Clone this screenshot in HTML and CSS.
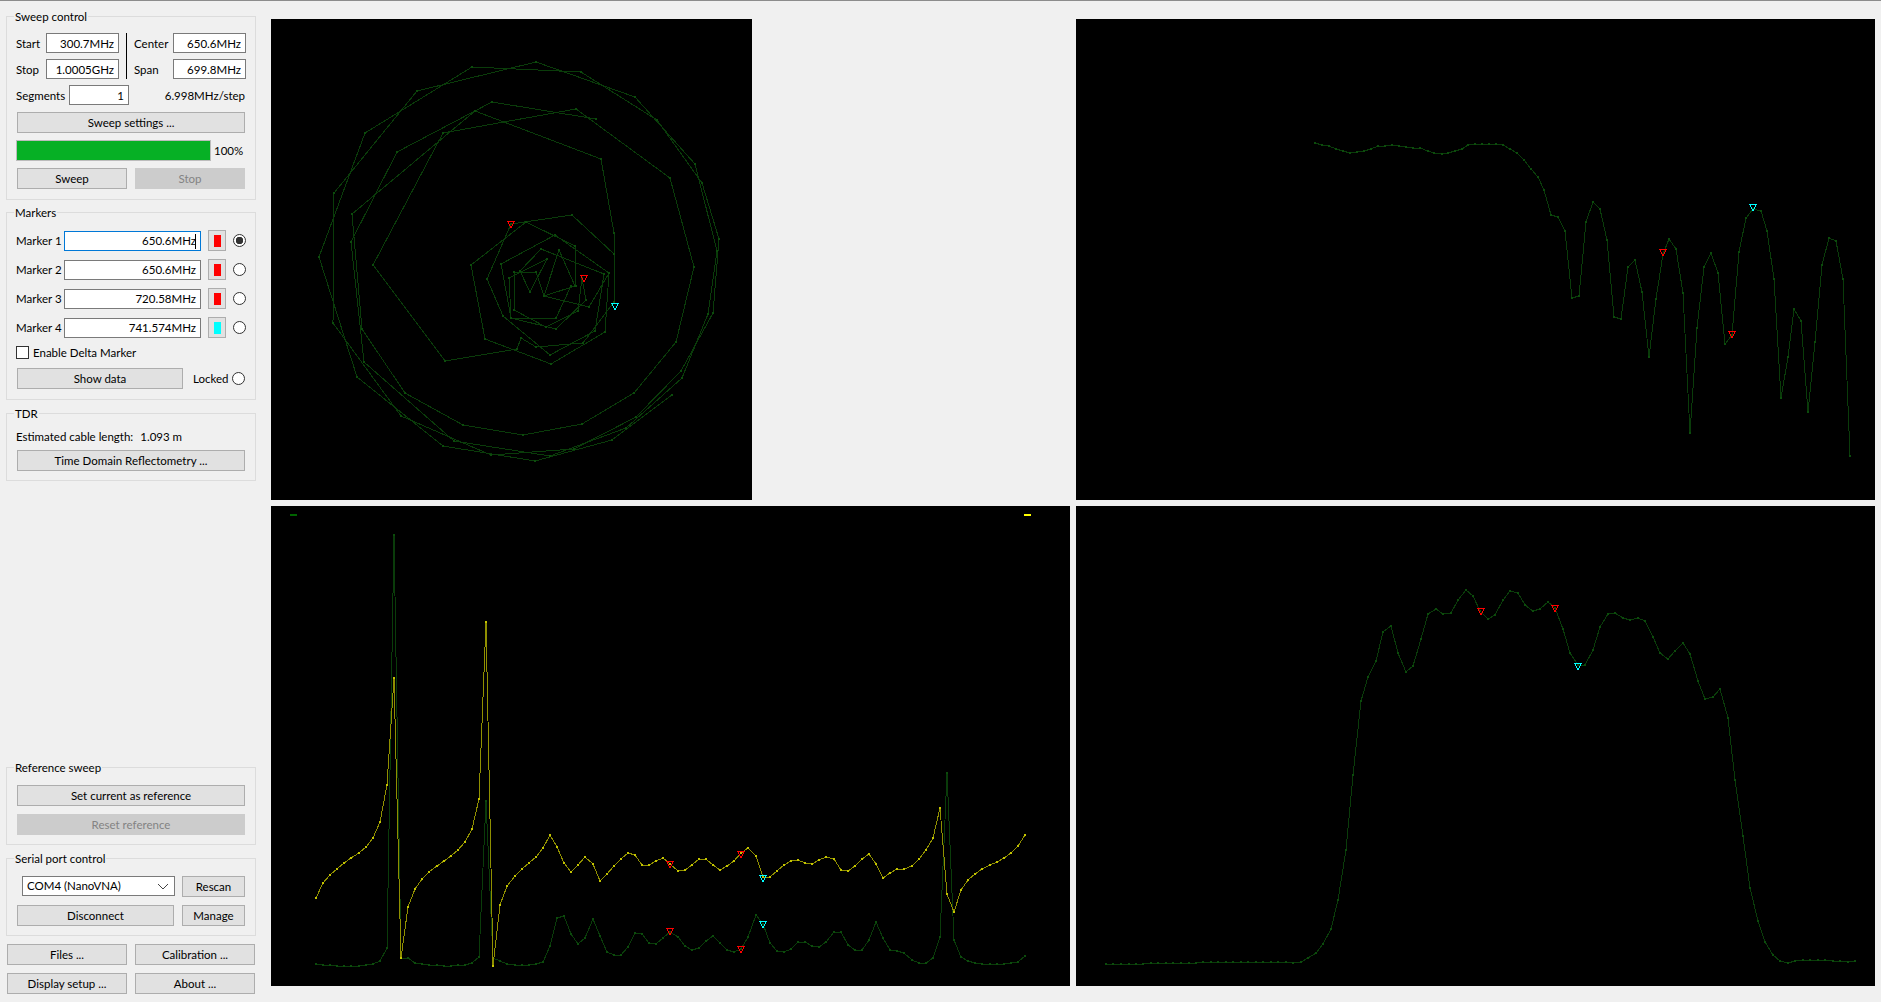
FILE: index.html
```html
<!DOCTYPE html>
<html lang="en">
<head>
  <meta charset="UTF-8" />
  <title>NanoVNA Saver</title>
  <link rel="stylesheet" href="styles.css">
</head>
<body>
  <aside id="controls">
    <section class="group sweep-group">
      <h2>Sweep control</h2>
      <div class="freq-grid">
        <div class="freq-col">
          <label class="row"><span class="lbl-start">Start</span><input class="field" value="300.7MHz"></label>
          <label class="row"><span class="lbl-start">Stop</span><input class="field" value="1.0005GHz"></label>
        </div>
        <div class="divider"></div>
        <div class="freq-col">
          <label class="row"><span class="lbl-center">Center</span><input class="field" value="650.6MHz"></label>
          <label class="row"><span class="lbl-center">Span</span><input class="field" value="699.8MHz"></label>
        </div>
      </div>
      <div class="row seg-row">
        <span class="lbl-seg">Segments</span>
        <input class="field seg-field" value="1">
        <span class="step">6.998MHz/step</span>
      </div>
      <button class="btn wide settings-btn">Sweep settings ...</button>
      <div class="progress-row">
        <div class="progress"><div class="progress-fill"></div></div>
        <span>100%</span>
      </div>
      <div class="btn-pair">
        <button class="btn">Sweep</button>
        <button class="btn" disabled>Stop</button>
      </div>
    </section>

    <section class="group marker-group">
      <h2>Markers</h2>
      <div class="marker-row">
        <span class="lbl-marker">Marker 1</span>
        <div class="field marker-field focused">650.6MHz<span class="caret"></span></div>
        <div class="swatch-btn"><div class="swatch red"></div></div>
        <div class="radio on"></div>
      </div>
      <div class="marker-row">
        <span class="lbl-marker">Marker 2</span>
        <div class="field marker-field">650.6MHz</div>
        <div class="swatch-btn"><div class="swatch red"></div></div>
        <div class="radio"></div>
      </div>
      <div class="marker-row">
        <span class="lbl-marker">Marker 3</span>
        <div class="field marker-field">720.58MHz</div>
        <div class="swatch-btn"><div class="swatch red"></div></div>
        <div class="radio"></div>
      </div>
      <div class="marker-row">
        <span class="lbl-marker">Marker 4</span>
        <div class="field marker-field">741.574MHz</div>
        <div class="swatch-btn"><div class="swatch cyan"></div></div>
        <div class="radio"></div>
      </div>
      <div class="check-row"><div class="check"></div><span>Enable Delta Marker</span></div>
      <div class="data-row">
        <button class="btn data-btn">Show data</button>
        <span class="locked">Locked</span>
        <div class="radio"></div>
      </div>
    </section>

    <section class="group tdr-group">
      <h2>TDR</h2>
      <div class="cable"><span>Estimated cable length:</span><span>1.093 m</span></div>
      <button class="btn wide">Time Domain Reflectometry ...</button>
    </section>

    <div class="spacer"></div>

    <section class="group ref-group">
      <h2>Reference sweep</h2>
      <button class="btn wide">Set current as reference</button>
      <button class="btn wide" disabled>Reset reference</button>
    </section>

    <section class="group serial-group">
      <h2>Serial port control</h2>
      <div class="serial-row">
        <div class="combo">COM4 (NanoVNA)
          <svg class="chevron" width="12" height="7" viewBox="0 0 12 7"><path d="M1 1l5 5 5-5" fill="none" stroke="#444" stroke-width="1"/></svg>
        </div>
        <button class="btn side-btn">Rescan</button>
      </div>
      <div class="serial-row">
        <button class="btn disconnect-btn">Disconnect</button>
        <button class="btn side-btn">Manage</button>
      </div>
    </section>

    <div class="bottom-btns">
      <button class="btn">Files ...</button>
      <button class="btn">Calibration ...</button>
      <button class="btn">Display setup ...</button>
      <button class="btn">About ...</button>
    </div>
  </aside>

  <main id="charts">
    <div class="chart-cell"><svg id="smith" class="chart square" width="481" height="481"></svg></div>
    <div class="chart-cell"><svg id="gain" class="chart" width="799" height="481"></svg></div>
    <div class="chart-cell"><svg id="vswr" class="chart" width="799" height="480"></svg></div>
    <div class="chart-cell"><svg id="s21" class="chart" width="799" height="480"></svg></div>
  </main>

  <script src="charts.js"></script>
</body>
</html>
```
FILE: styles.css
```css
* {
  box-sizing: border-box;
}
html, body {
  height: 100%;
}
body {
  margin: 0;
  height: 1002px;
  overflow: hidden;
  display: flex;
  background: #f0f0f0;
  border-top: 1px solid #8c8c8c;
  font-family: "Lato", "Noto Sans", sans-serif;
  font-size: 11.5px;
  color: #000;
}
#controls {
  width: 271px;
  flex: none;
  display: flex;
  flex-direction: column;
  padding: 15px 0 8px 6px;
}
.spacer {
  flex: 1;
}
.group {
  position: relative;
  width: 250px;
  border: 1px solid #dcdcdc;
  padding: 0 9px 0 9px;
  margin-bottom: 13px;
}
.group h2 {
  position: absolute;
  top: -8px;
  left: 7px;
  margin: 0;
  padding: 0 1px;
  background: #f0f0f0;
  font-size: 11.5px;
  line-height: 15px;
  font-weight: normal;
}
.sweep-group {
  height: 184px;
  padding-top: 16px;
  margin-bottom: 12px;
}
.marker-group {
  height: 188px;
  padding-top: 17px;
}
.tdr-group {
  height: 68px;
  padding-top: 15px;
}
.ref-group {
  height: 78px;
  padding-top: 17px;
}
.serial-group {
  height: 78px;
  padding-top: 17px;
  margin-bottom: 8px;
}
.row {
  display: flex;
  align-items: center;
}
.freq-grid {
  display: flex;
  height: 46px;
}
.freq-col {
  display: flex;
  flex-direction: column;
  gap: 6px;
}
.divider {
  width: 1px;
  background: #000;
  margin: 0 7px;
}
.lbl-start {
  width: 30px;
}
.lbl-center {
  width: 39px;
}
.field {
  width: 73px;
  height: 20px;
  border: 1px solid #7a7a7a;
  background: #fff;
  font: inherit;
  color: #000;
  text-align: right;
  padding: 0 4px;
  outline: none;
}
.seg-row {
  margin-top: 6px;
  height: 20px;
}
.lbl-seg {
  width: 53px;
}
.seg-field {
  width: 60px;
}
.step {
  margin-left: auto;
  margin-right: 1px;
}
.btn {
  height: 21px;
  border: 1px solid #adadad;
  background: #e1e1e1;
  font: inherit;
  color: #000;
  padding: 0;
}
.btn[disabled] {
  background: #cccccc;
  border-color: #cccccc;
  color: #838383;
}
.wide {
  display: block;
  width: 228px;
  margin-left: 1px;
}
.settings-btn {
  margin-top: 7px;
}
.progress-row {
  display: flex;
  align-items: center;
  gap: 3px;
  margin-top: 7px;
  height: 21px;
}
.progress {
  width: 195px;
  height: 21px;
  border: 1px solid #bcbcbc;
  background: #e6e6e6;
}
.progress-fill {
  height: 100%;
  background: #06b025;
}
.btn-pair {
  display: flex;
  gap: 8px;
  margin: 7px 0 0 1px;
}
.btn-pair .btn {
  width: 110px;
}
.marker-row {
  display: flex;
  align-items: center;
  height: 21px;
  margin-bottom: 8px;
}
.lbl-marker {
  width: 48px;
}
.marker-field {
  width: 137px;
  height: 20px;
  line-height: 18px;
  position: relative;
}
.focused {
  border-color: #0078d7;
}
.caret {
  position: absolute;
  right: 4px;
  top: 2px;
  width: 1px;
  height: 15px;
  background: #000;
}
.swatch-btn {
  width: 18px;
  height: 21px;
  margin-left: 7px;
  background: #e1e1e1;
  border: 1px solid #adadad;
  display: flex;
  align-items: center;
  justify-content: center;
}
.swatch {
  width: 7px;
  height: 12px;
}
.red {
  background: #ff0000;
}
.cyan {
  background: #00ffff;
}
.radio {
  width: 13px;
  height: 13px;
  margin-left: 7px;
  border: 1px solid #333;
  border-radius: 50%;
  background: #fff;
  flex: none;
}
.radio.on {
  background: radial-gradient(circle, #333 0 3.5px, #fff 4px);
}
.check-row {
  display: flex;
  align-items: center;
  gap: 4px;
  height: 13px;
  margin-top: 1px;
}
.check {
  width: 13px;
  height: 13px;
  border: 1px solid #333;
  background: #fff;
}
.data-row {
  display: flex;
  align-items: center;
  margin: 9px 0 0 1px;
}
.data-btn {
  width: 166px;
}
.locked {
  margin-left: 10px;
}
.data-row .radio {
  margin-left: auto;
  margin-right: 1px;
}
.cable {
  display: flex;
  gap: 7px;
  height: 16px;
  line-height: 16px;
}
.tdr-group .btn {
  margin-top: 5px;
}
.ref-group .btn + .btn {
  margin-top: 8px;
}
.serial-row {
  display: flex;
  justify-content: space-between;
  margin: 0 0 8px 1px;
  width: 228px;
}
.combo {
  width: 153px;
  height: 20px;
  margin-left: 5px;
  border: 1px solid #7a7a7a;
  background: #fff;
  line-height: 18px;
  padding-left: 4px;
  position: relative;
}
.chevron {
  position: absolute;
  right: 5px;
  top: 6px;
}
.side-btn {
  width: 63px;
}
.disconnect-btn {
  width: 157px;
}
.bottom-btns {
  display: grid;
  grid-template-columns: 120px 120px;
  gap: 8px;
  margin-left: 1px;
}
#charts {
  display: grid;
  grid-template-columns: 799px 799px;
  grid-template-rows: 481px 480px;
  column-gap: 6px;
  row-gap: 6px;
  padding-top: 18px;
}
.chart-cell {
  display: flex;
}
.chart {
  display: block;
  background: #000;
}
```
FILE: charts.js
```js
// traces are stored in the units they were read off at (ox/oy origin, sx/sy units per px)
const GREEN = '#0a3c0a';
const GREEN_DOT = '#0c4c0c';
const YELLOW = '#8f8f00';
const YELLOW_DOT = '#c4c400';

const smithTraces = [
  [[1205,1140],[1026,1275],[796,1337],[519,1293],[261,1086],[148,725],[285,353],[605,156],[933,170],[1162,314],[1295,505],[1346,672],[1329,893],[1232,1068],[1098,1207],[912,1303],[663,1319],[393,1202],[189,924],[192,533],[441,228],[797,141],[1095,245],[1275,447],[1342,708],[1315,896],[1237,1088],[1068,1240],[840,1322],[552,1277],[281,1042],[243,680],[380,410],[666,261],[978,312]],
  [[919,281],[1200,488],[1272,756],[1218,982],[1092,1133],[936,1228],[760,1260],[578,1230],[404,1134],[275,943],[247,597],[615,287],[994,432],[1033,655],[1033,860],[940,985],[798,995],[753,968],[741,1002],[525,1038],[309,750],[519,355],[919,281]],
  [[1033,860],[1033,717],[907,600],[723,628],[651,791],[700,902],[840,1020],[975,947],[1002,776],[813,702],[750,768],[781,830],[832,732],[716,790],[724,908],[858,942],[948,855],[935,790],[924,887],[828,935],[733,885],[733,770],[797,770],[822,843],[868,705],[915,812],[822,843],[958,876],[1018,774],[855,660],[693,746],[723,908],[858,910],[903,812]],
  [[1018,774],[1005,951],[844,1047],[645,971],[604,750],[768,621],[915,692],[918,812]]
];

const gainTrace = [[65,68],[84,74],[103,77],[121,86],[140,92],[159,98],[178,96],[196,92],[215,86],[234,79],[252,77],[271,75],[290,78],[308,81],[327,84],[346,85],[365,92],[383,100],[402,103],[420,100],[438,94],[455,86],[473,76],[491,73],[510,71],[528,71],[546,71],[565,76],[584,86],[602,98],[620,119],[640,146],[658,171],[674,209],[692,285],[710,292],[730,332],[748,535],[767,528],[785,305],[803,247],[822,266],[841,360],[860,592],[878,597],[896,441],[915,419],[934,517],[952,712],[971,537],[990,403],[1006,356],[1024,386],[1043,519],[1062,940],[1080,625],[1098,440],[1117,399],[1136,459],[1154,672],[1173,645],[1191,396],[1210,293],[1229,268],[1248,272],[1266,333],[1285,478],[1303,835],[1322,710],[1337,566],[1356,603],[1375,877],[1393,665],[1412,436],[1430,355],[1449,362],[1468,476],[1485,1008]];

const vswrYellow = [[138,1178],[159,1134],[180,1110],[201,1092],[222,1074],[243,1059],[267,1044],[288,1025],[309,998],[330,951],[351,840],[372,518],[393,1358],[414,1205],[435,1152],[456,1122],[477,1101],[501,1083],[522,1068],[543,1052],[564,1034],[585,1010],[606,971],[627,881],[648,352],[669,1383],[690,1199],[711,1142],[735,1113],[756,1092],[777,1074],[798,1055],[819,1028],[840,989],[861,1025],[882,1073],[903,1101],[924,1079],[945,1055],[968,1076],[990,1128],[1011,1106],[1032,1083],[1053,1062],[1074,1043],[1095,1049],[1116,1080],[1137,1080],[1158,1068],[1179,1058],[1200,1076],[1224,1097],[1245,1095],[1266,1080],[1287,1063],[1308,1062],[1329,1080],[1350,1095],[1371,1083],[1392,1067],[1413,1045],[1434,1028],[1458,1052],[1480,1116],[1500,1116],[1521,1098],[1542,1080],[1563,1067],[1584,1065],[1605,1074],[1626,1076],[1647,1065],[1668,1055],[1692,1061],[1713,1095],[1734,1098],[1755,1083],[1776,1062],[1797,1046],[1818,1077],[1839,1119],[1860,1104],[1881,1092],[1902,1092],[1926,1083],[1947,1061],[1968,1034],[1989,998],[2010,908],[2031,1168],[2052,1222],[2073,1155],[2094,1125],[2115,1107],[2136,1092],[2160,1080],[2181,1070],[2202,1059],[2223,1043],[2244,1022],[2265,990]];

const vswrGreen = [[138,1376],[159,1379],[180,1380],[201,1383],[222,1383],[243,1384],[267,1383],[288,1380],[309,1377],[330,1367],[351,1328],[372,91],[393,1358],[414,1359],[435,1374],[456,1376],[477,1380],[501,1380],[522,1383],[543,1382],[564,1380],[585,1380],[606,1374],[627,1355],[648,888],[669,1360],[690,1369],[711,1376],[735,1380],[756,1380],[777,1380],[798,1377],[819,1371],[840,1322],[861,1238],[882,1232],[903,1286],[924,1317],[945,1298],[968,1241],[990,1292],[1011,1340],[1032,1349],[1053,1349],[1074,1326],[1095,1283],[1116,1286],[1137,1314],[1158,1317],[1179,1298],[1200,1280],[1224,1295],[1245,1322],[1266,1335],[1287,1329],[1308,1307],[1329,1292],[1350,1313],[1371,1335],[1392,1341],[1413,1332],[1434,1296],[1458,1229],[1480,1256],[1500,1313],[1521,1338],[1542,1340],[1563,1332],[1584,1312],[1605,1310],[1626,1323],[1647,1326],[1668,1310],[1692,1280],[1713,1281],[1734,1319],[1755,1336],[1776,1335],[1797,1304],[1818,1250],[1839,1298],[1860,1335],[1881,1337],[1902,1343],[1926,1364],[1947,1373],[1968,1373],[1989,1358],[2010,1296],[2031,805],[2052,1304],[2073,1355],[2094,1367],[2115,1373],[2136,1377],[2160,1377],[2181,1377],[2202,1377],[2223,1374],[2244,1371],[2265,1352]];

const s21Trace = [[77,1188],[100,1188],[123,1188],[146,1188],[168,1188],[190,1187],[212,1185],[235,1185],[258,1185],[280,1185],[303,1185],[326,1185],[348,1184],[370,1182],[392,1182],[414,1182],[437,1182],[460,1182],[483,1182],[505,1182],[528,1182],[550,1182],[572,1182],[594,1182],[617,1182],[640,1184],[662,1183],[685,1170],[708,1155],[730,1128],[754,1082],[775,995],[798,846],[819,622],[842,398],[865,328],[888,280],[909,192],[933,173],[955,255],[979,313],[999,294],[1022,213],[1045,137],[1068,123],[1090,137],[1113,135],[1135,95],[1159,66],[1179,84],[1200,130],[1224,152],[1245,141],[1269,96],[1290,69],[1314,75],[1335,110],[1359,128],[1380,123],[1404,101],[1426,120],[1449,182],[1470,255],[1494,290],[1515,291],[1539,246],[1560,177],[1584,137],[1605,135],[1629,150],[1650,156],[1674,150],[1695,158],[1719,207],[1740,254],[1764,272],[1785,249],[1809,225],[1830,258],[1854,339],[1875,392],[1899,387],[1920,362],[1944,451],[1965,635],[1989,803],[2010,960],[2034,1059],[2055,1122],[2079,1160],[2100,1179],[2124,1184],[2145,1178],[2169,1176],[2190,1176],[2214,1176],[2235,1176],[2259,1179],[2280,1179],[2304,1181],[2325,1179]];

const charts = [
  {
    id: 'smith', ox: 3, oy: 12, sx: 3, sy: 3,
    traces: smithTraces.map(pts => ({ pts, color: GREEN, dot: GREEN_DOT })),
    markers: [[723,628,'#ff0000'],[943,790,'#ff0000'],[1036,873,'#00ffff']]
  },
  {
    id: 'gain', ox: -567.7, oy: -303, sx: 2.6525, sy: 3,
    traces: [{ pts: gainTrace, color: GREEN, dot: GREEN_DOT }],
    markers: [[990,397,'#ff0000'],[1173,642,'#ff0000'],[1229,262,'#00ffff']]
  },
  {
    id: 'vswr', ox: 3, oy: 3, sx: 3, sy: 3,
    traces: [{ pts: vswrGreen, color: GREEN, dot: GREEN_DOT }, { pts: vswrYellow, color: YELLOW, dot: YELLOW_DOT }],
    markers: [[1201,1077,'#ff0000'],[1201,1278,'#ff0000'],[1414,1047,'#ff0000'],[1414,1331,'#ff0000'],[1480,1119,'#00ffff'],[1480,1258,'#00ffff']],
    legend: [[19,8,'#006400'],[753,8,'#ffff00']]
  },
  {
    id: 's21', ox: -12, oy: -186, sx: 3, sy: 3,
    traces: [{ pts: s21Trace, color: GREEN, dot: GREEN_DOT }],
    markers: [[1203,130,'#ff0000'],[1426,121,'#ff0000'],[1495,295,'#00ffff']]
  }
];

const NS = 'http://www.w3.org/2000/svg';

function add(svg, tag, attrs) {
  const el = document.createElementNS(NS, tag);
  for (const k in attrs) el.setAttribute(k, attrs[k]);
  svg.appendChild(el);
}

charts.forEach(c => {
  const svg = document.getElementById(c.id);
  const px = p => [Math.round((p[0] - c.ox) / c.sx), Math.round((p[1] - c.oy) / c.sy)];

  c.traces.forEach(t => {
    const pts = t.pts.map(px);
    add(svg, 'polyline', {
      points: pts.map(p => p.join(',')).join(' '),
      fill: 'none', stroke: t.color, 'stroke-width': 1, 'shape-rendering': 'crispEdges'
    });
    pts.forEach(p => add(svg, 'rect', { x: p[0] - 1, y: p[1] - 1, width: 2, height: 2, fill: t.dot }));
  });

  (c.legend || []).forEach(l => add(svg, 'rect', { x: l[0], y: l[1], width: 7, height: 2, fill: l[2] }));

  c.markers.forEach(m => {
    const [x, y] = px(m);
    add(svg, 'polygon', {
      points: `${x - 3.5},${y - 3} ${x + 3.5},${y - 3} ${x},${y + 4}`,
      fill: 'none', stroke: m[2], 'stroke-width': 1, 'shape-rendering': 'crispEdges'
    });
  });
});
```
